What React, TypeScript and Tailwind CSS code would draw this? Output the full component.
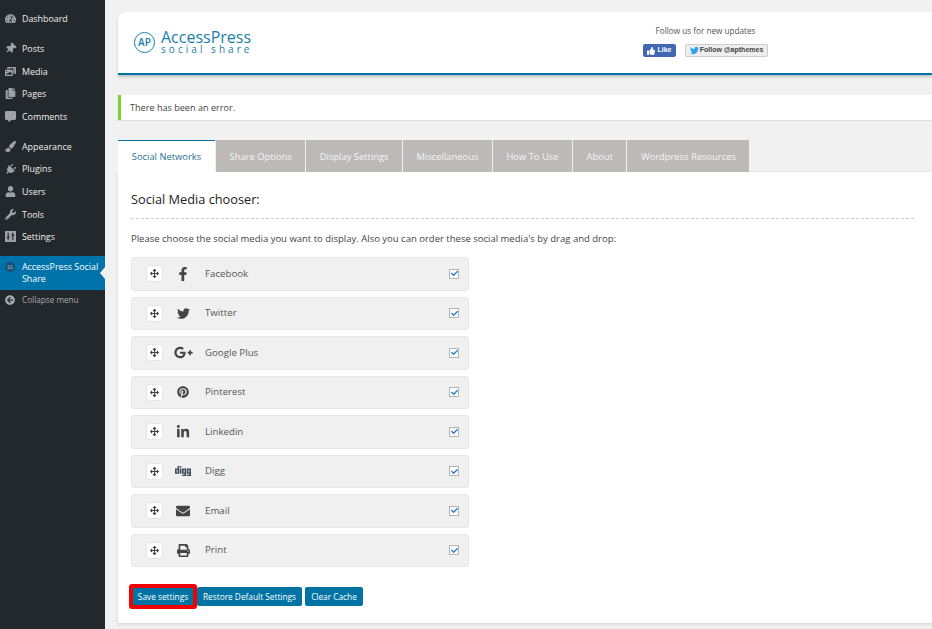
import React from "react";
import {
  FaThumbtack, FaPhotoVideo, FaCopy, FaCommentAlt, FaPaintBrush, FaPlug, FaUser, FaWrench,
  FaFacebookF, FaTwitter, FaGooglePlusG, FaPinterest, FaLinkedinIn, FaDigg, FaEnvelope, FaPrint,
  FaArrowsAlt, FaThumbsUp, FaArrowCircleLeft, FaTachometerAlt, FaCheck,
} from "react-icons/fa";

const SettingsIcon = () => (
  <svg viewBox="0 0 12 12" width="11" height="11" aria-hidden="true">
    <path fill="#9ea3a8" d="M0 0h12v12H0z" />
    <path stroke="#23282d" strokeWidth="1.2" fill="none" d="M3.5 2v8M8.5 2v8M2 7h3M7 4.5h3" />
  </svg>
);

type Nav = { label: string; icon: React.ReactNode; cls: string };

const nav: Nav[] = [
  { label: "Dashboard", icon: <FaTachometerAlt />, cls: "mt-[7px] mb-[7.8px]" },
  { label: "Posts", icon: <FaThumbtack className="rotate-45" />, cls: "" },
  { label: "Media", icon: <FaPhotoVideo />, cls: "" },
  { label: "Pages", icon: <FaCopy />, cls: "" },
  { label: "Comments", icon: <FaCommentAlt />, cls: "" },
  { label: "Appearance", icon: <FaPaintBrush />, cls: "mt-[7.4px]" },
  { label: "Plugins", icon: <FaPlug className="rotate-45" />, cls: "" },
  { label: "Users", icon: <FaUser />, cls: "" },
  { label: "Tools", icon: <FaWrench />, cls: "" },
  { label: "Settings", icon: <SettingsIcon />, cls: "" },
];

const networks: { label: string; icon: React.ReactNode }[] = [
  { label: "Facebook", icon: <FaFacebookF className="text-[14px]" /> },
  { label: "Twitter", icon: <FaTwitter className="text-[13px]" /> },
  { label: "Google Plus", icon: <FaGooglePlusG className="text-[19px]" /> },
  { label: "Pinterest", icon: <FaPinterest className="text-[12px]" /> },
  { label: "Linkedin", icon: <FaLinkedinIn className="text-[14px]" /> },
  { label: "Digg", icon: <FaDigg className="text-[16px] text-[#3d4a57]" /> },
  { label: "Email", icon: <FaEnvelope className="text-[14px]" /> },
  { label: "Print", icon: <FaPrint className="text-[13px]" /> },
];

const tabs = ["Share Options", "Display Settings", "Miscellaneous", "How To Use", "About", "Wordpress Resources"];

export default function App() {
  return (
    <div className="flex h-[629px] w-[932px] overflow-hidden bg-[#f1f1f1] font-['Open_Sans',sans-serif] text-[#444]">
      <aside className="w-[105px] shrink-0 bg-[#23282d] text-[8.9px]">
        {nav.map((n) => (
          <div key={n.label} className={`flex h-[22.6px] items-center text-[#eee] ${n.cls}`}>
            <span className="flex w-[20px] shrink-0 justify-center text-[11px] text-[#9ea3a8]">{n.icon}</span>
            <span className="pl-[2px]">{n.label}</span>
          </div>
        ))}
        <div className="relative mt-[7.7px] flex h-[34px] bg-[#0073aa] pt-[5px] leading-[12px] text-white">
          <span className="flex w-[20px] shrink-0 justify-center pt-[1px]">
            <span className="flex h-[10px] w-[10px] items-center justify-center rounded-full bg-[#1d4f70] text-[5px] text-[#9fc3d8]">SS</span>
          </span>
          <span className="pl-[2px]">AccessPress Social Share</span>
          <span className="absolute right-0 top-[11px] h-0 w-0 border-y-[6px] border-r-[5px] border-y-transparent border-r-[#f1f1f1]" />
        </div>
        <div className="flex h-[21px] items-center text-[#a8abae]">
          <FaArrowCircleLeft className="ml-[5px] mr-[7px] text-[10px]" />
          <span className="text-[8.2px]">Collapse menu</span>
        </div>
      </aside>

      <main className="min-w-0 flex-1 pl-[13px] pt-[12px]">
        <header className="flex h-[63px] items-start justify-between rounded-tl-[8px] border-b-[2px] border-[#0073aa] bg-white shadow-[0_2px_3px_rgba(0,0,0,0.2)]">
          <div className="flex items-center pl-[16px] pt-[18px] text-[#1a7ea8]">
            <span className="flex h-[21px] w-[21px] items-center justify-center rounded-full border-[1.5px] border-[#1a7ea8] text-[10px] font-semibold">AP</span>
            <div className="ml-[6px]">
              <div className="text-[16px] leading-[14px]">AccessPress</div>
              <div className="text-[10px] leading-[11px] tracking-[3.05px]">social share</div>
            </div>
          </div>
          <div className="mr-[164px] flex flex-col items-center pt-[12px]">
            <div className="text-[8.2px] leading-[14px] text-[#555]">Follow us for new updates</div>
            <div className="mt-[6px] flex items-center gap-[9px] font-['Liberation_Sans',sans-serif] text-[7px] font-bold">
              <span className="flex h-[13px] w-[33px] items-center justify-center gap-[2px] rounded-[2px] bg-[#4267b2] text-white">
                <FaThumbsUp className="text-[8px]" />Like
              </span>
              <span className="flex h-[13px] w-[83px] items-center justify-center gap-[1px] rounded-[2px] border border-[#ccc] bg-[#eee] text-[#444]">
                <FaTwitter className="text-[9px] text-[#2aa3ef]" />Follow @apthemes
              </span>
            </div>
          </div>
        </header>

        <div className="mt-[20px] flex h-[25px] items-center border-l-[3px] border-[#7ad03a] bg-white pl-[9px] text-[9.1px] text-[#444] shadow-[0_1px_1px_rgba(0,0,0,0.08)]">
          There has been an error.
        </div>

        <nav className="mt-[20px] flex h-[32px] text-[9.4px]">
          <div className="flex w-[97px] items-center justify-center border-t border-[#0073aa] bg-white pt-[1px] text-[#1f7196]">Social Networks</div>
          {tabs.map((t) => (
            <div key={t} className="ml-px flex items-center bg-[#bdb9b9] px-[13.5px] pt-[2px] text-[#f4f4f4]">{t}</div>
          ))}
        </nav>

        <section className="h-[451px] bg-white pl-[13px] pr-[18px] shadow-[0_1px_3px_rgba(0,0,0,0.15)]">
          <h2 className="pt-[18px] text-[12.75px] leading-[18px] text-[#222]">Social Media chooser:</h2>
          <div className="mt-[10px] border-b border-dashed border-[#ccc]" />
          <p className="mt-[14px] text-[9.5px] leading-[12px] text-[#444]">
            Please choose the social media you want to display. Also you can order these social media's by drag and drop:
          </p>
          <div className="mt-[12px] flex w-[338px] flex-col gap-[6px]">
            {networks.map((n) => (
              <div key={n.label} className="flex h-[33.5px] items-center rounded-[3px] border border-[#e6e6e6] bg-[#f0f0f0] pl-[13.5px] pr-[9px]">
                <span className="flex h-[17px] w-[17px] items-center justify-center rounded-[3px] border border-[#e4e4e4] bg-white text-[9px] text-[#444]">
                  <FaArrowsAlt />
                </span>
                <span className="flex w-[41px] justify-center text-[#444]">{n.icon}</span>
                <span className="ml-[1.5px] flex-1 pt-[1px] text-[9.7px] text-[#555]">{n.label}</span>
                <span className="flex h-[10px] w-[10px] items-center justify-center border border-[#b4b4b4] bg-white text-[7px] text-[#2a7fd0]">
                  <FaCheck />
                </span>
              </div>
            ))}
          </div>
          <div className="-ml-[2px] mt-[16.5px] flex items-center text-[8.3px] text-white">
            <button className="h-[25.5px] w-[68px] rounded-[3px] border-[4.5px] border-[#f00000] bg-[#0073a5] pt-[1px]">Save settings</button>
            <button className="h-[19px] w-[105px] rounded-[2px] bg-[#0073a5] pt-[1px]">Restore Default Settings</button>
            <button className="ml-[3px] h-[19px] w-[58px] rounded-[2px] bg-[#0073a5] pt-[1px]">Clear Cache</button>
          </div>
        </section>
      </main>
    </div>
  );
}
